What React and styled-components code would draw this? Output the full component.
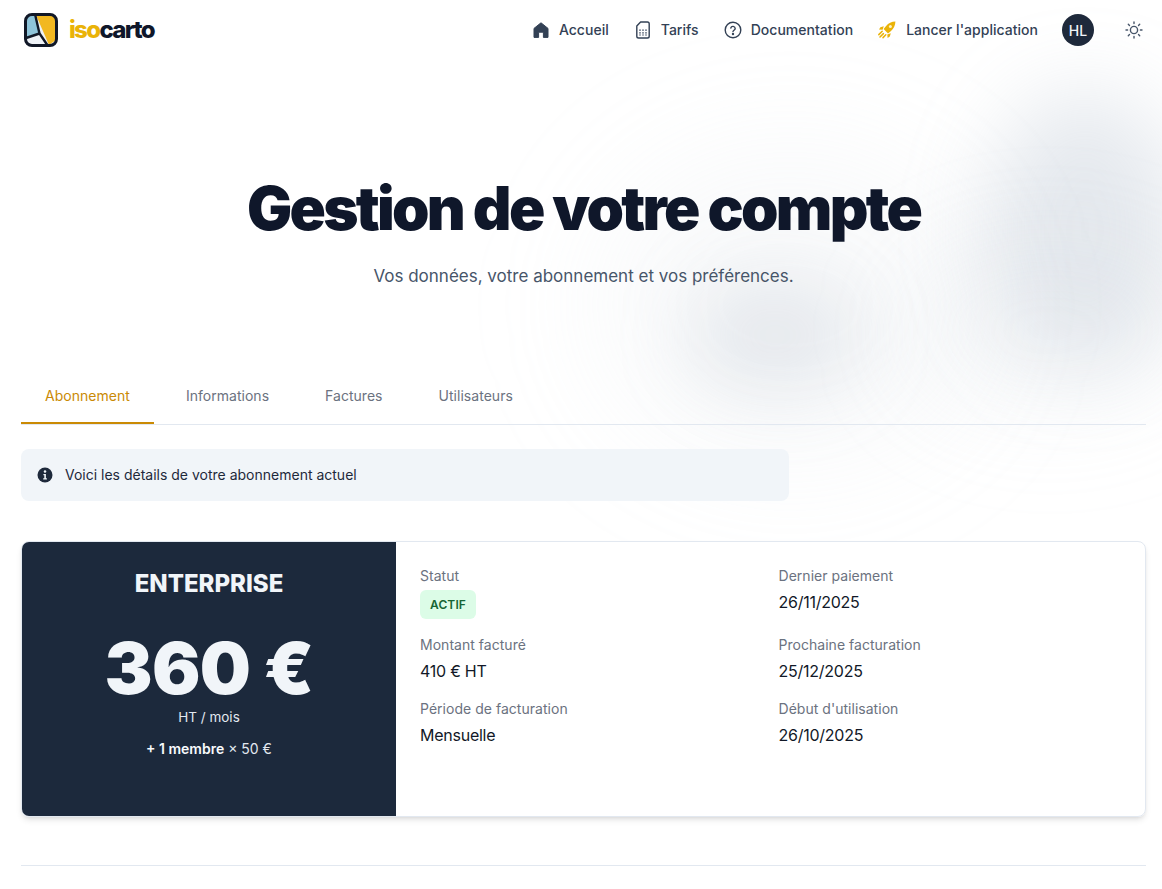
import React from "react";
import styled, { createGlobalStyle } from "styled-components";

const Global = createGlobalStyle`
  html, body { margin: 0; padding: 0; background: #fff; }
  body { font-family: Inter, "Liberation Sans", sans-serif; color: #0f172a; -webkit-font-smoothing: antialiased; }
`;

const Page = styled.div`
  position: relative;
  width: 1162px;
  height: 889px;
  overflow: hidden;
  background: #fff;
`;

const Glow = styled.div`
  position: absolute;
  left: ${(p) => p.$x}px;
  top: ${(p) => p.$y}px;
  width: ${(p) => p.$w}px;
  height: ${(p) => p.$h}px;
  border-radius: 50%;
  background: rgba(${(p) => p.$c}, ${(p) => p.$a});
  filter: blur(${(p) => p.$b}px);
  pointer-events: none;
`;

const Content = styled.div`
  position: relative;
  display: flex;
  flex-direction: column;
`;

const Header = styled.header`
  display: flex;
  align-items: center;
  justify-content: space-between;
  height: 60px;
  padding: 0 18px 0 24px;
`;

const Brand = styled.div`
  display: flex;
  align-items: center;
  gap: 11px;
`;

const Wordmark = styled.div`
  font-size: 24px;
  font-weight: 800;
  letter-spacing: -0.07em;
  color: #0f172a;
  line-height: 30px;
`;

const Iso = styled.span`
  color: #eab308;
`;

const Nav = styled.nav`
  display: flex;
  align-items: center;
`;

const NavItem = styled.a`
  display: flex;
  align-items: center;
  gap: ${(p) => p.$gap || 8}px;
  margin-right: 24px;
  font-size: 14px;
  font-weight: 500;
  letter-spacing: 0.002em;
  color: #334155;
  white-space: nowrap;
  line-height: 20px;
`;

const Avatar = styled.div`
  width: 32px;
  height: 32px;
  border-radius: 50%;
  background: #1e293b;
  color: #f1f5f9;
  font-size: 14px;
  font-weight: 500;
  display: flex;
  align-items: center;
  justify-content: center;
`;

const ThemeBtn = styled.button`
  border: 0;
  background: none;
  padding: 0;
  margin-left: 30px;
  width: 20px;
  height: 20px;
  color: #475569;
  display: flex;
`;

const Main = styled.main`
  padding: 0 16px 0 21px;
  display: flex;
  flex-direction: column;
`;

const Hero = styled.section`
  padding-top: 112px;
  display: flex;
  flex-direction: column;
  align-items: center;
`;

const Title = styled.h1`
  margin: 0;
  font-size: 60px;
  line-height: 72px;
  font-weight: 900;
  letter-spacing: -2.7px;
  word-spacing: 0.5px;
  color: #0f172a;
`;

const Subtitle = styled.p`
  margin: 18px 0 0;
  font-size: 17px;
  line-height: 28px;
  color: #475569;
`;

const Tabs = styled.div`
  display: flex;
  margin-top: 81px;
  height: 53px;
  border-bottom: 1px solid #e2e8f0;
`;

const Tab = styled.div`
  padding: 0 24px 2px;
  margin-right: 8px;
  height: 53px;
  display: flex;
  align-items: center;
  box-sizing: border-box;
  font-size: 14px;
  letter-spacing: 0.002em;
  color: ${(p) => (p.$active ? "#ca8a04" : "#6b7280")};
  border-bottom: 2px solid ${(p) => (p.$active ? "#ca8a04" : "transparent")};
`;

const Notice = styled.div`
  display: flex;
  align-items: center;
  gap: 12px;
  width: 768px;
  height: 52px;
  margin-top: 24px;
  padding: 0 16px 1px;
  box-sizing: border-box;
  background: #f1f5f9;
  border-radius: 8px;
  font-size: 14px;
  color: #1e293b;
`;

const CardShadow = styled.div`
  border-radius: 8px;
  box-shadow: 0 4px 6px -1px rgba(0,0,0,.1), 0 2px 4px -2px rgba(0,0,0,.1);
  margin-top: 40px;
`;

const Card = styled.section`
  display: flex;
  height: 276px;
  box-sizing: border-box;
  border: 1px solid #e2e8f0;
  border-radius: 8px;
  overflow: hidden;
  background: #fff;
`;

const PlanPane = styled.div`
  width: 374px;
  flex: none;
  background: #1c293c;
  color: #f1f5f9;
  display: flex;
  flex-direction: column;
  align-items: center;
  box-sizing: border-box;
  padding-top: 26px;
`;

const PlanName = styled.div`
  font-size: 24px;
  line-height: 32px;
  font-weight: 800;
`;

const Price = styled.div`
  margin-top: 32px;
  font-size: 72px;
  line-height: 72px;
  font-weight: 900;
  letter-spacing: -0.01em;
`;

const Per = styled.div`
  margin-top: 3px;
  font-size: 13.5px;
  line-height: 20px;
  color: #e2e8f0;
`;

const Extra = styled.div`
  margin-top: 12px;
  font-size: 14px;
  line-height: 20px;
  color: #e2e8f0;
  strong { font-weight: 600; color: #f8fafc; }
`;

const Details = styled.div`
  flex: 1;
  display: grid;
  grid-template-columns: 358.5px 1fr;
  grid-template-rows: 69px 64px 64px;
  padding: 24px 24px 0;
  align-content: start;
`;

const Field = styled.div`
  display: flex;
  flex-direction: column;
  align-items: flex-start;
`;

const Label = styled.div`
  font-size: 14px;
  line-height: 20px;
  letter-spacing: 0.002em;
  color: #6b7280;
`;

const Value = styled.div`
  margin-top: 4px;
  font-size: 16px;
  line-height: 24px;
  letter-spacing: -0.25px;
  color: #111827;
`;

const Badge = styled.span`
  margin-top: 4px;
  height: 29px;
  padding: 0 10px;
  display: flex;
  align-items: center;
  background: #dcfce7;
  color: #166534;
  border-radius: 6px;
  font-size: 12px;
  font-weight: 600;
  letter-spacing: 0.01em;
`;

const Rule = styled.hr`
  margin: 48px 0 0;
  border: 0;
  border-top: 1px solid #e2e8f0;
`;

const Logo = () => (
  <svg width="34" height="34" viewBox="0 0 34 34">
    <rect x="1.5" y="1.5" width="31" height="31" rx="6.5" fill="#eef2f7" />
    <path d="M2 7 Q2 2 7 2 H11 L15 21 L2 25 Z" fill="#8ec4da" />
    <path d="M12 2 H27 Q32 2 32 7 V27 L25 32 Z" fill="#f2b821" />
    <path d="M11 1 L15.5 20.5 L24 33" fill="none" stroke="#111827" strokeWidth="2.4" />
    <path d="M2 25 L15.5 20.5" fill="none" stroke="#111827" strokeWidth="2.4" />
    <rect x="1.5" y="1.5" width="31" height="31" rx="6.5" fill="none" stroke="#111827" strokeWidth="3" />
  </svg>
);

const HomeIcon = () => (
  <svg width="20" height="20" viewBox="0 0 20 20" fill="#334155">
    <path d="M10 2.8 17 8.4V17.4H12.4V12.2H7.6V17.4H3V8.4Z" stroke="#334155" strokeWidth="1" strokeLinejoin="round" />
  </svg>
);

const SimIcon = () => (
  <svg width="20" height="20" viewBox="0 0 20 20" fill="none" stroke="#334155" strokeWidth="1.4">
    <path d="M7.6 2H14.4a1.8 1.8 0 0 1 1.8 1.8V16.2a1.8 1.8 0 0 1-1.8 1.8H5.6a1.8 1.8 0 0 1-1.8-1.8V6Z" strokeLinejoin="round" />
    <path d="M7 9.6v1.2M10 9.6v1.2M13 9.6v1.2M7 12.2v1.2M10 12.2v1.2M13 12.2v1.2M7 14.6v1M10 14.6v1M13 14.6v1" strokeWidth="1.5" />
  </svg>
);

const HelpIcon = () => (
  <svg width="20" height="20" viewBox="0 0 20 20" fill="none" stroke="#334155" strokeWidth="1.4" strokeLinecap="round">
    <circle cx="10" cy="10" r="7.8" />
    <path d="M7.8 8a2.25 2.25 0 0 1 4.4.6c0 1.5-2.2 1.8-2.2 3" />
    <circle cx="10" cy="14" r=".5" fill="#334155" />
  </svg>
);

const RocketIcon = () => (
  <svg width="20" height="20" viewBox="0 0 20 20">
    <path d="M18.4 1.6c-3.8.1-7 1.6-9.3 4.4L6.6 9l4.4 4.4 3-2.5c2.8-2.3 4.3-5.5 4.4-9.3Z" fill="#eab308" />
    <path d="M6.8 6.2 3.4 7.2 2 9.4l3.6.3ZM13.8 13.2l-1 3.4-2.2 1.4-.3-3.6Z" fill="#eab308" />
    <circle cx="13.4" cy="6.6" r="1.5" fill="#fef3c7" />
    <path d="M5.2 11.2 1.8 14.6M6.4 13.6 3 17M8.8 14.8 6 17.6" stroke="#eab308" strokeWidth="1.5" strokeLinecap="round" />
  </svg>
);

const SunIcon = () => (
  <svg width="20" height="20" viewBox="0 0 20 20" fill="none" stroke="#475569" strokeWidth="1.4" strokeLinecap="round">
    <circle cx="10" cy="10" r="3.6" />
    <path d="M10 2v1.6M10 16.4V18M2 10h1.6M16.4 10H18M4.3 4.3l1.2 1.2M14.5 14.5l1.2 1.2M4.3 15.7l1.2-1.2M14.5 5.5l1.2-1.2" />
  </svg>
);

const InfoIcon = () => (
  <svg width="16" height="16" viewBox="0 0 16 16">
    <circle cx="8" cy="8" r="7.5" fill="#1e293b" />
    <circle cx="8" cy="4.6" r="1.25" fill="#f1f5f9" />
    <path d="M6.4 7h2.5v4.2h1v1.2H6.2v-1.2h1.1V8.2h-.9Z" fill="#f1f5f9" />
  </svg>
);

const fields = [
  { label: "Statut", badge: "ACTIF" }, { label: "Dernier paiement", value: "26/11/2025" },
  { label: "Montant facturé", value: "410 € HT" }, { label: "Prochaine facturation", value: "25/12/2025" },
  { label: "Période de facturation", value: "Mensuelle" }, { label: "Début d'utilisation", value: "26/10/2025" },
];

export default function App() {
  return (
    <Page>
      <Global />
      <Glow $x={985} $y={90} $w={200} $h={280} $b={42} $c="148,163,184" $a={0.24} />
      <Glow $x={690} $y={280} $w={170} $h={110} $b={38} $c="148,163,184" $a={0.22} />
      <Glow $x={590} $y={140} $w={400} $h={330} $b={60} $c="203,213,225" $a={0.12} />
      <Glow $x={900} $y={240} $w={300} $h={180} $b={50} $c="203,213,225" $a={0.12} />
      <Content>
        <Header>
          <Brand>
            <Logo />
            <Wordmark><Iso>iso</Iso>carto</Wordmark>
          </Brand>
          <Nav>
            <NavItem><HomeIcon />Accueil</NavItem>
            <NavItem><SimIcon />Tarifs</NavItem>
            <NavItem><HelpIcon />Documentation</NavItem>
            <NavItem $gap={9}><RocketIcon />Lancer l'application</NavItem>
            <Avatar>HL</Avatar>
            <ThemeBtn><SunIcon /></ThemeBtn>
          </Nav>
        </Header>
        <Main>
          <Hero>
            <Title>Gestion de votre compte</Title>
            <Subtitle>Vos données, votre abonnement et vos préférences.</Subtitle>
          </Hero>
          <Tabs>
            <Tab $active>Abonnement</Tab>
            <Tab>Informations</Tab>
            <Tab>Factures</Tab>
            <Tab>Utilisateurs</Tab>
          </Tabs>
          <Notice><InfoIcon />Voici les détails de votre abonnement actuel</Notice>
          <CardShadow>
            <Card>
              <PlanPane>
                <PlanName>ENTERPRISE</PlanName>
                <Price>360 €</Price>
                <Per>HT / mois</Per>
                <Extra><strong>+ 1 membre</strong> × 50 €</Extra>
              </PlanPane>
              <Details>
                {fields.map((f) => (
                  <Field key={f.label}>
                    <Label>{f.label}</Label>
                    {f.badge ? <Badge>{f.badge}</Badge> : <Value>{f.value}</Value>}
                  </Field>
                ))}
              </Details>
            </Card>
          </CardShadow>
          <Rule />
        </Main>
      </Content>
    </Page>
  );
}
